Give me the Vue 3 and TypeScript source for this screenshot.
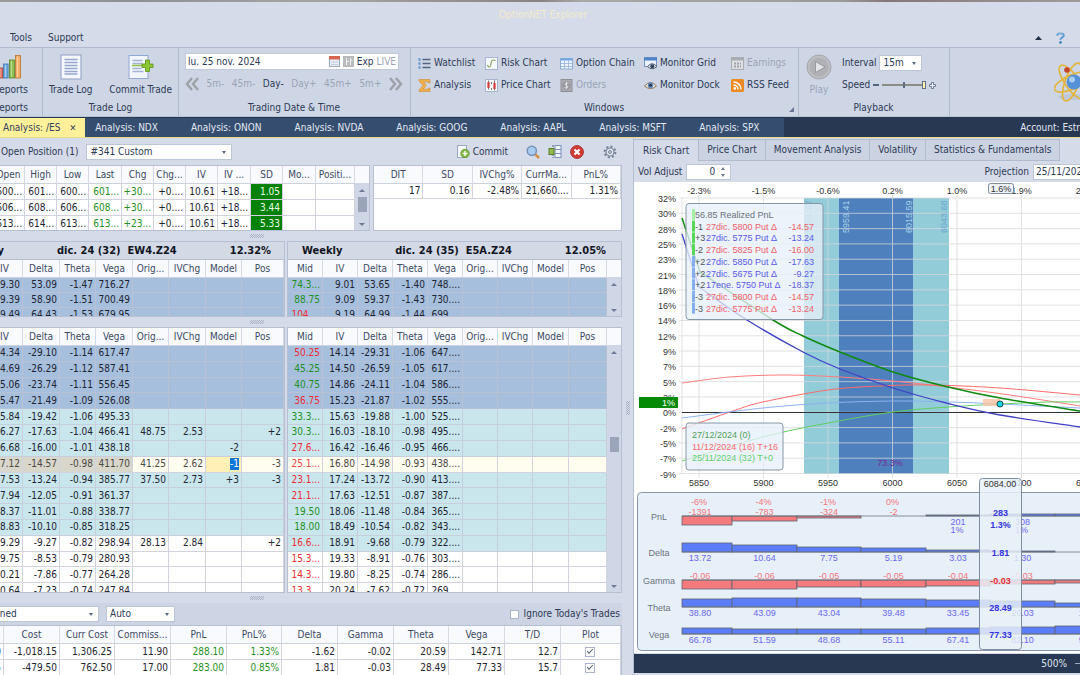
<script setup lang="ts">
type Pt = [number, number]
interface Row { cells: string[]; tone: string }

const analysisTabs = ['NDX', 'ONON', 'NVDA', 'GOOG', 'AAPL', 'MSFT', 'SPX']
const steps = [
  { label: '5m-', on: false }, { label: '45m-', on: false }, { label: 'Day-', on: true },
  { label: 'Day+', on: false }, { label: '45m+', on: false }, { label: '5m+', on: false },
]
const windowTools = [
  { id: 'watch', label: 'Watchlist' }, { id: 'risk', label: 'Risk Chart' }, { id: 'chain', label: 'Option Chain' },
  { id: 'grid', label: 'Monitor Grid' }, { id: 'earn', label: 'Earnings', off: true },
  { id: 'sigma', label: 'Analysis' }, { id: 'price', label: 'Price Chart' }, { id: 'orders', label: 'Orders', off: true },
  { id: 'eye', label: 'Monitor Dock' }, { id: 'rss', label: 'RSS Feed' },
]

const quoteHead = ['Open', 'High', 'Low', 'Last', 'Chg', 'Chg...', 'IV', 'IV ...', 'SD', 'Mo...', 'Positi...']
const quoteWidths = [32, 32, 32, 33, 32, 32, 32, 33, 32, 33, 39]
const quotes = [
  ['600...', '601...', '600...', '601...', '+30...', '+0....', '10.61', '+18...', '1.05', '', ''],
  ['606...', '608...', '606...', '608...', '+30...', '+0....', '10.61', '+18...', '3.44', '', ''],
  ['613...', '614...', '613...', '613...', '+23...', '+0....', '10.61', '+18...', '5.33', '', ''],
]
const statHead = ['DIT', 'SD', 'IVChg%', 'CurrMa...', 'PnL%']
const stats = ['17', '0.16', '-2.48%', '21,660....', '1.31%']

const leftHead = ['IV', 'Delta', 'Theta', 'Vega', 'Orig...', 'IVChg', 'Model', 'Pos']
const leftWidths = [36, 37, 36, 37, 36, 37, 36, 42]
const rightHead = ['Mid', ...leftHead]
const rightWidths = [35, 35, 35, 35, 35, 35, 35, 36, 38]

function rows(text: string): Row[] {
  return text.trim().split('\n').map((line) => {
    const [tone, ...cells] = line.trim().split(/\s+/)
    return { tone, cells: cells.map((c) => (c === '_' ? '' : c)) }
  })
}
const leftCalls = rows(`
  deep 9.30 53.09 -1.47 716.27 _ _ _ _
  deep 9.39 58.90 -1.51 700.49 _ _ _ _
  deep 9.49 64.43 -1.53 679.95 _ _ _ _`)
const rightCalls = rows(`
  deep g74.3... 9.01 53.65 -1.40 748.... _ _ _ _
  deep g88.75 9.09 59.37 -1.43 730.... _ _ _ _
  deep r104.... 9.19 64.99 -1.44 699.... _ _ _ _`)
const leftPuts = rows(`
  deep 14.34 -29.10 -1.14 617.47 _ _ _ _
  deep 14.69 -26.29 -1.12 587.41 _ _ _ _
  deep 15.06 -23.74 -1.11 556.45 _ _ _ _
  deep 15.47 -21.49 -1.09 526.08 _ _ _ _
  pale 15.84 -19.42 -1.06 495.33 _ _ _ _
  pale 16.27 -17.63 -1.04 466.41 48.75 2.53 _ +2
  pale 16.68 -16.00 -1.01 438.18 _ _ -2 _
  pick 17.12 -14.57 -0.98 411.70 41.25 2.62 -1 -3
  pale 17.53 -13.24 -0.94 385.77 37.50 2.73 +3 -3
  pale 17.94 -12.05 -0.91 361.37 _ _ _ _
  pale 18.37 -11.01 -0.88 338.77 _ _ _ _
  pale 18.83 -10.10 -0.85 318.25 _ _ _ _
  none 19.29 -9.27 -0.82 298.94 28.13 2.84 _ +2
  none 19.75 -8.53 -0.79 280.93 _ _ _ _
  none 20.21 -7.86 -0.77 264.28 _ _ _ _
  none 20.64 -7.23 -0.74 247.84 _ _ _ _`)
const rightPuts = rows(`
  deep r50.25 14.14 -29.31 -1.06 647.... _ _ _ _
  deep g45.25 14.50 -26.59 -1.05 617.... _ _ _ _
  deep g40.75 14.86 -24.11 -1.04 586.... _ _ _ _
  deep r36.75 15.23 -21.87 -1.02 555.... _ _ _ _
  pale g33.3... 15.63 -19.88 -1.00 525.... _ _ _ _
  pale g30.3... 16.03 -18.10 -0.98 495.... _ _ _ _
  pale r27.6... 16.42 -16.46 -0.95 466.... _ _ _ _
  pick r25.1... 16.80 -14.98 -0.93 438.... _ _ _ _
  pale r23.1... 17.24 -13.72 -0.90 413.... _ _ _ _
  pale r21.1... 17.63 -12.51 -0.87 387.... _ _ _ _
  pale g19.50 18.06 -11.48 -0.84 365.... _ _ _ _
  pale g18.00 18.49 -10.54 -0.82 343.... _ _ _ _
  pale r16.6... 18.91 -9.68 -0.79 322.... _ _ _ _
  none r15.3... 19.33 -8.91 -0.76 303.... _ _ _ _
  none r14.3... 19.80 -8.25 -0.74 286.... _ _ _ _
  none r13.3... 20.24 -7.62 -0.72 269.... _ _ _ _`)

const panels = [
  { side: 'left', name: 'Weekly', expiry: 'dic. 24 (32)  EW4.Z24', iv: '12.32%', head: leftHead, widths: leftWidths, calls: leftCalls, puts: leftPuts },
  { side: 'right', name: 'Weekly', expiry: 'dic. 24 (35)  E5A.Z24', iv: '12.05%', head: rightHead, widths: rightWidths, calls: rightCalls, puts: rightPuts },
]
const shown = (c: string) => c.replace(/^[gr]/, '')
const hue = (c: string) => (c[0] === 'g' ? 'up' : c[0] === 'r' ? 'down' : '')

const sumHead = ['', 'Cost', 'Curr Cost', 'Commiss...', 'PnL', 'PnL%', 'Delta', 'Gamma', 'Theta', 'Vega', 'T/D', 'Plot']
const sumWidths = [36, 56, 55, 56, 56, 55, 56, 56, 55, 56, 56, 60]
const sums = [
  ['0', '-1,018.15', '1,306.25', '11.90', '288.10', '1.33%', '-1.62', '-0.02', '20.59', '142.71', '12.7'],
  ['5', '-479.50', '762.50', '17.00', '283.00', '0.85%', '1.81', '-0.03', '28.49', '77.33', '15.7'],
]

const chartTabs = ['Risk Chart', 'Price Chart', 'Movement Analysis', 'Volatility', 'Statistics & Fundamentals']

/* Chart geometry */
const pctLabels = ['32%', '30%', '28%', '25%', '23%', '21%', '18%', '16%', '14%', '12%', '9%', '7%', '5%', '2%', '0%', '-2%', '-5%', '-7%', '-9%']
const yAt = (i: number) => 198 + (i * 275.5) / 18
const xAt = (price: number) => 699 + ((price - 5850) * 64.5) / 50
const prices = [5850, 5900, 5950, 6000, 6050, 6100, 6150]
const moves = ['-2.3%', '-1.5%', '-0.6%', '0.2%', '1.0%', '1.9%', '2.7%']

function smooth(pts: Pt[]): string {
  let d = `M${pts[0][0]} ${pts[0][1]}`
  for (let i = 0; i < pts.length - 1; i++) {
    const a = pts[Math.max(i - 1, 0)], b = pts[i], c = pts[i + 1], e = pts[Math.min(i + 2, pts.length - 1)]
    d += `C${b[0] + (c[0] - a[0]) / 6} ${b[1] + (c[1] - a[1]) / 6} ${c[0] - (e[0] - b[0]) / 6} ${c[1] - (e[1] - b[1]) / 6} ${c[0]} ${c[1]}`
  }
  return d
}
const curves = [
  { color: '#ff7d7d', w: 1, d: smooth([[682, 383], [730, 377], [785, 375], [840, 377], [893, 381], [948, 387], [1010, 395], [1080, 406]]) },
  { color: '#ff6a6a', w: 1, d: smooth([[682, 429], [733, 411], [763, 402], [828, 390], [880, 386], [930, 385], [1000, 388], [1080, 395]]) },
  { color: '#8db2f0', w: 1, d: smooth([[682, 418], [763, 408], [828, 403], [893, 401], [950, 402], [1000, 404], [1080, 408]]) },
  { color: '#62cf62', w: 1, d: smooth([[682, 461], [763, 437], [828, 423], [893, 412], [948, 407], [1000, 404], [1050, 402], [1080, 402]]) },
  { color: '#4040c8', w: 1.3, d: 'M682 234L699 287' + smooth([[699, 287], [747, 320], [803, 352], [840, 369], [893, 388], [950, 404], [1000, 415], [1080, 427]]).replace('M', 'L') },
  { color: '#108a10', w: 1.5, d: 'M682 218L700 272' + smooth([[700, 272], [773, 320], [803, 336], [840, 352], [893, 372], [948, 387], [1000, 398], [1080, 411]]).replace('M', 'L') },
]
const zones = [
  { label: '5931.32', x: 811, color: '#6aa9cc' }, { label: '5959.41', x: 849, color: '#a9d3ea' },
  { label: '6015.59', x: 912, color: '#a9d3ea' }, { label: '6043.68', x: 947, color: '#6aa9cc' },
]
const legs = [
  { qty: '', text: '56.85 Realized PnL', delta: '', tone: '#6b747c', bar: '#a4f0a4' },
  { qty: '-1', text: '27dic. 5800 Put Δ', delta: '-14.57', tone: '#ee6068', bar: '#58d858' },
  { qty: '+3', text: '27dic. 5775 Put Δ', delta: '-13.24', tone: '#5a5ae8', bar: '#58d858' },
  { qty: '-2', text: '27dic. 5825 Put Δ', delta: '-16.00', tone: '#ee6068', bar: '#58d858' },
  { qty: '+2', text: '27dic. 5850 Put Δ', delta: '-17.63', tone: '#5a5ae8', bar: '#84aeec' },
  { qty: '+2', text: '27dic. 5675 Put Δ', delta: '-9.27', tone: '#5a5ae8', bar: '#84aeec' },
  { qty: '+2', text: '17ene. 5750 Put Δ', delta: '-18.37', tone: '#5a5ae8', bar: '#84aeec' },
  { qty: '-3', text: '27dic. 5800 Put Δ', delta: '-14.57', tone: '#ee6068', bar: '#84aeec' },
  { qty: '-3', text: '27dic. 5775 Put Δ', delta: '-13.24', tone: '#ee6068', bar: '#84aeec' },
]
const edges = [682, 732, 797, 861, 926, 990, 1055, 1120]
const greeks = [
  { name: 'PnL', base: 516, size: [-9, -5, -2, 0, 1, 2, 2], vals: ['-1391', '-783', '-324', '-2', '201', '308', '380'], now: '283', neg: false },
  { name: 'Delta', base: 552, size: [9, 7, 5, 4, 2, 1, 0], vals: ['13.72', '10.64', '7.75', '5.19', '3.03', '1.30', '0.02'], now: '1.81', neg: false },
  { name: 'Gamma', base: 580, size: [-9, -9, -7, -7, -6, -4, -3], vals: ['-0.06', '-0.06', '-0.05', '-0.05', '-0.04', '-0.03', '-0.02'], now: '-0.03', neg: true },
  { name: 'Theta', base: 607, size: [8, 9, 9, 8, 7, 6, 4], vals: ['38.80', '43.09', '43.04', '39.48', '33.45', '26.03', '18.88'], now: '28.49', neg: false },
  { name: 'Vega', base: 634, size: [6, 5, 5, 5, 6, 7, 8], vals: ['66.78', '51.59', '48.68', '55.11', '67.41', '82.10', '95.10'], now: '77.33', neg: false },
]
const pnlPct = ['-6%', '-4%', '-1%', '0%', '1%', '1%', '2%']
const isNeg = (v: string) => v.startsWith('-')
const valueY = (g: { base: number }, v: string) => (isNeg(v) ? g.base - 1 : g.base + 9)
</script>

<template>
  <div class="app">
    <div class="backdrop"></div>
    <header class="title">
      <h1>OptionNET Explorer</h1>
      <nav class="menu">
        <a href="#">Tools</a><a href="#">Support</a>
        <span class="grow"></span>
        <svg width="7" height="4" viewBox="0 0 7 4"><path d="M0 4L3.5 0L7 4Z" fill="#26324a" /></svg>
        <svg class="help" width="9" height="12" viewBox="0 0 10 13"><path d="M1.5 4C1.5 0.8 8.5 0.8 8.5 4C8.5 6 5 5.6 5 8.4" fill="none" stroke="#5f9fd0" stroke-width="2.4" /><path d="M2.2 3.4C3 1.6 6 1.500 7.400 2.800" fill="none" stroke="#b6d9f2" /><circle cx="5" cy="11.4" r="1.5" fill="#3e85bd" /></svg>
      </nav>
    </header>

    <section class="ribbon">
      <div class="group g-reports">
        <button class="big">
          <svg width="28" height="26" viewBox="0 0 28 26"><g stroke-width=".8"><rect x="1" y="14" width="4.6" height="10" fill="#e37a68" stroke="#b04838" /><rect x="6.5" y="10" width="4.6" height="14" fill="#73abdf" stroke="#3b74ac" /><rect x="12.5" y="6" width="5" height="18" fill="#8ec054" stroke="#57852a" /><rect x="18.5" y="1.500" width="5" height="22.500" fill="#f3b06a" stroke="#b87430" /><path d="M3 15v8M8.500 11v12M14.500 7v16M20.500 3v20" stroke="#fff" opacity=".5" /></g></svg>
          <span>Reports</span>
        </button>
        <p>Reports</p>
      </div>
      <div class="group g-log">
        <div class="bigs">
          <button class="big">
            <svg width="22" height="26" viewBox="0 0 22 26"><rect x="1" y="1" width="20" height="24" fill="#f4f7fc" stroke="#8c9fc4" /><path d="M4.500 5.500h13M4.500 8.500h13M4.500 11.500h13M4.500 14.500h13M4.500 17.500h13M4.500 20h13" stroke="#97a7cd" stroke-width="1.600" /></svg>
            <span>Trade Log</span>
          </button>
          <button class="big">
            <svg width="26" height="26" viewBox="0 0 26 26"><rect x="1" y="1.500" width="19" height="23" fill="#f1f5fc" stroke="#8fa8d4" /><path d="M4.500 6.500h10M4.500 9.500h10M4.500 14.500h9M4.500 17.500h11" stroke="#a5b2d2" stroke-width="1.600" /><path d="M4 11.500h13" stroke="#8fc043" stroke-width="1.500" /><path d="M17.500 6h4v4h3.500v3.500h-3.500v4h-4v-4H14v-3.500h3.500Z" fill="#8cc834" stroke="#5c9018" stroke-width=".8" /></svg>
            <span>Commit Trade</span>
          </button>
        </div>
        <p>Trade Log</p>
      </div>
      <div class="group g-date">
        <div>
          <div class="datebox">
            <input type="text" value="lu. 25 nov. 2024" aria-label="Trading date">
            <svg width="11" height="11" viewBox="0 0 11 11"><rect x=".5" y=".5" width="10" height="10" fill="#e9edf6" stroke="#9aa5be" /><path d="M0 0h11v3.500H0Z" fill="#d6664f" /><path d="M2 6h7M2 8.500h7" stroke="#c4cbdc" /></svg>
            <svg width="11" height="11" viewBox="0 0 11 11"><rect width="11" height="11" fill="#b9babd" /><path d="M3.500 2v7M7.500 2v7M4 5.500h2M8 4h1.500" stroke="#f2f2f2" /></svg>
            <span>Exp</span><span class="dim">LIVE</span>
          </div>
          <div class="steps">
            <button aria-label="Back"><svg width="14" height="14" viewBox="0 0 14 14"><path d="M7 1L2 7L7 13M13 1L8 7L13 13" fill="none" stroke="#9da1a8" stroke-width="2.400" /></svg></button>
            <button v-for="s in steps" :key="s.label" :class="{ dim: !s.on }">{{ s.label }}</button>
            <button aria-label="Forward"><svg width="14" height="14" viewBox="0 0 14 14"><path d="M1 1L6 7L1 13M7 1L12 7L7 13" fill="none" stroke="#9da1a8" stroke-width="2.400" /></svg></button>
          </div>
        </div>
        <p>Trading Date &amp; Time</p>
      </div>
      <div class="group g-win">
        <div class="tools">
          <button v-for="t in windowTools" :key="t.id" :class="{ dim: t.off }">
            <svg width="13" height="13" viewBox="0 0 13 13">
              <template v-if="t.id === 'watch'"><path d="M4.500 2.500H12.500M4.500 6.500H12.500M4.500 10.500H12.500" stroke="#52647f" stroke-width="1.300" /><path d="M.5 2.500h2M.5 6.500h2M.5 10.500h2" stroke="#5f93cc" stroke-width="2.400" /></template>
              <template v-else-if="t.id === 'risk'"><rect x=".5" y=".5" width="12" height="12" fill="#f6f9fb" stroke="#a7b5d0" /><path d="M2.500 8C3.500 11.500 6 10 6 6.500S8.500 2.500 10.500 3.500" fill="none" stroke="#8aa05a" stroke-width="1.100" /></template>
              <template v-else-if="t.id === 'chain'"><rect x=".5" y="1.500" width="12" height="10.500" fill="#eef4fc" stroke="#8cacd6" /><path d="M1 2.500H12" stroke="#6fa5e0" stroke-width="2" /><path d="M1 6.500h11M1 9.500h11M4.500 4v8M8.500 4v8" stroke="#a5bde0" /></template>
              <template v-else-if="t.id === 'grid'"><rect x=".5" y=".5" width="12" height="9" fill="#eaf1fa" stroke="#7293c2" /><path d="M0 2H13" stroke="#4d84c8" stroke-width="3" /><path d="M3.500 9.500Q8 4 13 9.500Q8 14 3.500 9.500" fill="#dbe2ea" stroke="#4d5c70" /><circle cx="8.300" cy="9.200" r="2" fill="#34465f" /></template>
              <template v-else-if="t.id === 'earn'"><rect x=".5" y=".5" width="12" height="12" fill="#dfe0e4" stroke="#a9acb2" /><path d="M0 2H13" stroke="#a9acb2" stroke-width="3" /><path d="M3 6.500h7M3 9.500h7" stroke="#9ea1a8" stroke-width="2" stroke-dasharray="2 1" /></template>
              <template v-else-if="t.id === 'sigma'"><path d="M1 .5H12V4H10.500L10 2.800H5.500L8.500 6.500L5 10.200H10L10.700 9H12V12.500H1V11L5 6.500L1 2Z" fill="#f0b04c" stroke="#cf8c30" stroke-width=".6" /></template>
              <template v-else-if="t.id === 'price'"><rect x=".5" y=".5" width="12" height="12" fill="#f8f8fb" stroke="#a7b5d0" /><path d="M3.500 1.500v9M6.500 3v8M9.500 1.500v10" stroke="#555" stroke-width=".8" /><path d="M3.500 3v6M9.500 4v6" stroke="#d73a3a" stroke-width="2.200" /><path d="M6.500 5v4" stroke="#fff" stroke-width="1.800" /></template>
              <template v-else-if="t.id === 'orders'"><rect x="1" y=".5" width="11" height="12" fill="#a9abb0" stroke="#8e9096" /><circle cx="6.500" cy="6.500" r="4.200" fill="#96989c" /><path d="M8.500 4.500C5 3 4 6 6.500 6.500S8 10 4.500 8.500M6.500 3v7" fill="none" stroke="#e1e2e5" /></template>
              <template v-else-if="t.id === 'eye'"><path d="M.5 7Q6.500 0 12.500 7Q6.500 12 .5 7" fill="#f2eee6" stroke="#8c7050" /><circle cx="6.500" cy="6.300" r="2.800" fill="#5f86b8" /><circle cx="6.500" cy="6.300" r="1.300" fill="#1e2c40" /></template>
              <template v-else><rect width="13" height="13" rx="1.500" fill="#ee8a22" /><circle cx="3.800" cy="9.400" r="1.300" fill="#fff" /><path d="M2.500 6a4.500 4.500 0 0 1 4.600 4.600M2.500 3a7.500 7.500 0 0 1 7.600 7.600" fill="none" stroke="#fff" stroke-width="1.400" /></template>
            </svg>
            {{ t.label }}
          </button>
        </div>
        <p>Windows</p>
        <svg class="launcher" width="5" height="5" viewBox="0 0 5 5"><path d="M5 0V5H0Z" fill="#66758f" /></svg>
      </div>
      <div class="group g-play">
        <div class="playrow">
          <button class="big dim">
            <svg width="26" height="26" viewBox="0 0 26 26"><circle cx="13" cy="13" r="12" fill="#bdbec2" stroke="#a5a7ac" /><circle cx="13" cy="13" r="9.500" fill="#b0b1b6" /><path d="M9.500 7.500L19 13L9.500 18.500Z" fill="#e2e3e6" stroke="#8c8e93" stroke-width=".8" /></svg>
            <span>Play</span>
          </button>
          <div class="settings">
            <div class="line"><label for="interval">Interval</label><span class="combo c-int"><select id="interval"><option>15m</option></select></span></div>
            <div class="line"><label for="speed">Speed</label><svg width="6" height="2" viewBox="0 0 6 2"><path d="M0 1H6" stroke="#56657f" stroke-width="2" /></svg><input id="speed" type="range" min="0" max="2" value="2"><svg width="7" height="7" viewBox="0 0 7 7"><path d="M2.500 .5h2v2h2v2h-2v2h-2v-2h-2v-2h2Z" fill="#e8edf6" stroke="#56657f" stroke-width=".8" /></svg></div>
          </div>
        </div>
        <p>Playback</p>
      </div>
      <div class="atom">
        <svg width="26" height="42" viewBox="0 0 26 42"><ellipse cx="18" cy="36" rx="14" ry="3" fill="#b4bccb" opacity=".6" /><g fill="none" stroke="#e2b53e" stroke-width="1.700"><ellipse cx="18" cy="21" rx="7" ry="20" transform="rotate(-35 18 21)" /><ellipse cx="18" cy="21" rx="7" ry="20" transform="rotate(20 18 21)" /><ellipse cx="18" cy="21" rx="7" ry="19" transform="rotate(66 18 21)" /></g><circle cx="20" cy="21" r="7.500" fill="#5591d6" /><circle cx="18" cy="18.500" r="3" fill="#a8ccf2" /><circle cx="13" cy="9" r="2.800" fill="#c8432c" /></svg>
      </div>
    </section>

    <nav class="doctabs">
      <button class="on">Analysis: /ES <span>✕</span></button>
      <button v-for="t in analysisTabs" :key="t">Analysis: {{ t }}</button>
      <span class="account">Account: Estr</span>
    </nav>

    <main class="work">
      <section class="book">
        <div class="bar">
          <label for="pos">Open Position (1)</label>
          <span class="combo c-pos"><select id="pos"><option>#341 Custom</option></select></span>
          <span class="grow"></span>
          <button class="commit">
            <svg width="13" height="13" viewBox="0 0 13 13"><rect x=".5" y=".5" width="9" height="12" fill="#f5f8fc" stroke="#98a9ca" /><circle cx="8" cy="8.500" r="4.300" fill="#7fb83c" stroke="#557f2a" stroke-width=".6" /><path d="M8 6v5M5.500 8.500h5" stroke="#fff" stroke-width="1.400" /></svg>
            Commit
          </button>
          <button aria-label="Find"><svg width="14" height="14" viewBox="0 0 14 14"><path d="M9 9L13 13" stroke="#d5914a" stroke-width="2.600" /><circle cx="5.800" cy="5.800" r="4.600" fill="#a9cdf0" stroke="#7891b8" stroke-width="1.500" /></svg></button>
          <button aria-label="Columns"><svg width="14" height="13" viewBox="0 0 14 13"><rect x="7" y=".5" width="6" height="12" fill="#f1f5fb" stroke="#7c90b8" /><path d="M7 4.500h6M7 8.500h6" stroke="#7c90b8" /><path d="M5 0v13" stroke="#55657f" stroke-dasharray="2 1" /><rect x="1" y="3.500" width="5" height="6" fill="#94b84a" stroke="#5e7d2b" /></svg></button>
          <button aria-label="Close"><svg width="14" height="14" viewBox="0 0 14 14"><circle cx="7" cy="7" r="6.400" fill="#d23a34" stroke="#a83832" /><path d="M4.500 4.500L9.500 9.500M9.500 4.500L4.500 9.500" stroke="#fff" stroke-width="2.200" /></svg></button>
          <button aria-label="Settings" class="gear"><svg width="14" height="14" viewBox="0 0 14 14"><circle cx="7" cy="7" r="5.400" fill="none" stroke="#77839a" stroke-width="2" stroke-dasharray="2.100 2.100" /><circle cx="7" cy="7" r="4" fill="#e3e7ee" stroke="#77839a" stroke-width="1.200" /><circle cx="7" cy="7" r="1.500" fill="#cdd4e2" stroke="#77839a" /></svg></button>
        </div>

        <div class="tops">
          <div class="frame quotes">
            <table>
              <colgroup><col v-for="(w, i) in quoteWidths" :key="i" :style="{ width: w + 'px' }"></colgroup>
              <thead><tr><th v-for="h in quoteHead" :key="h">{{ h }}</th></tr></thead>
              <tbody><tr v-for="(r, i) in quotes" :key="i"><td v-for="(c, j) in r" :key="j" :class="{ up: j === 3 || j === 4, sd: j === 8 }">{{ c }}</td></tr></tbody>
            </table>
            <div class="scroll"><i class="cap"></i><i class="arrow upward"></i><i class="thumb"></i><span class="grow"></span><i class="arrow"></i></div>
          </div>
          <div class="frame stats">
            <table>
              <thead><tr><th v-for="h in statHead" :key="h">{{ h }}</th></tr></thead>
              <tbody><tr><td v-for="c in stats" :key="c">{{ c }}</td></tr></tbody>
            </table>
          </div>
        </div>
        <div class="grip"><i></i></div>

        <div class="chains calls">
          <div v-for="p in panels" :key="p.side" class="frame chain" :class="p.side">
            <div class="caption"><span class="name">{{ p.name }}</span><span>{{ p.expiry }}</span><span>{{ p.iv }}</span></div>
            <div class="pane">
              <table>
                <colgroup><col v-for="(w, i) in p.widths" :key="i" :style="{ width: w + 'px' }"></colgroup>
                <thead><tr><th v-for="h in p.head" :key="h">{{ h }}</th></tr></thead>
                <tbody><tr v-for="(r, i) in p.calls" :key="i" :class="r.tone"><td v-for="(c, j) in r.cells" :key="j" :class="hue(c)">{{ shown(c) }}</td></tr></tbody>
              </table>
              <div v-if="p.side === 'right'" class="scroll"><i class="cap"></i><i class="arrow upward"></i><span class="grow"></span><i class="arrow"></i></div>
            </div>
          </div>
        </div>
        <div class="grip"><i></i></div>

        <div class="chains puts">
          <div v-for="p in panels" :key="p.side" class="frame chain" :class="p.side">
            <div class="pane">
              <table>
                <colgroup><col v-for="(w, i) in p.widths" :key="i" :style="{ width: w + 'px' }"></colgroup>
                <thead><tr><th v-for="h in p.head" :key="h">{{ h }}</th></tr></thead>
                <tbody>
                  <tr v-for="(r, i) in p.puts" :key="i" :class="r.tone">
                    <td v-for="(c, j) in r.cells" :key="j" :class="[hue(c), { edit: p.side === 'left' && r.tone === 'pick' && j === 6 }]">
                      <input v-if="p.side === 'left' && r.tone === 'pick' && j === 6" type="text" :value="c" aria-label="Model quantity">
                      <template v-else>{{ shown(c) }}</template>
                    </td>
                  </tr>
                </tbody>
              </table>
              <div v-if="p.side === 'right'" class="scroll tall"><i class="cap"></i><i class="arrow upward"></i><i class="thumb"></i><span class="grow"></span><i class="arrow"></i></div>
            </div>
          </div>
        </div>
        <div class="grip"><i></i></div>

        <div class="bar options">
          <span class="combo c-mode"><select aria-label="Grouping"><option>Combined</option></select></span>
          <span class="combo c-auto"><select aria-label="Mode"><option>Auto</option></select></span>
          <span class="grow"></span>
          <label class="check"><input type="checkbox"> Ignore Today's Trades</label>
        </div>
        <div class="frame sums">
          <table>
            <colgroup><col v-for="(w, i) in sumWidths" :key="i" :style="{ width: w + 'px' }"></colgroup>
            <thead><tr><th v-for="h in sumHead" :key="h">{{ h }}</th></tr></thead>
            <tbody>
              <tr v-for="(r, i) in sums" :key="i">
                <td v-for="(c, j) in r" :key="j" :class="{ up: j === 4 || j === 5 }">{{ c }}</td>
                <td class="plot"><input type="checkbox" checked aria-label="Plot"></td>
              </tr>
            </tbody>
          </table>
        </div>
      </section>

      <div class="vgrip"><i></i></div>

      <section class="charts">
        <nav class="charttabs"><button v-for="(t, i) in chartTabs" :key="t" :class="{ on: i === 0 }">{{ t }}</button></nav>
        <div class="bar adjust">
          <label for="vol">Vol Adjust</label>
          <span class="spin"><input id="vol" type="text" value="0"><span><i class="arrow upward"></i><i class="arrow"></i></span></span>
          <span class="grow"></span>
          <label for="proj">Projection</label>
          <input id="proj" class="proj" type="text" value="25/11/2024">
        </div>
        <svg class="plotarea" viewBox="634 182 446 471" preserveAspectRatio="xMinYMin slice">
          <rect x="804" y="198" width="145" height="276" fill="#92ccd9" />
          <rect x="839" y="198" width="74" height="276" fill="#4d80bc" />
          <g stroke="#d8d8dc" stroke-width="1" opacity=".75">
            <path v-for="(l, i) in pctLabels" :key="l" :d="`M679 ${yAt(i)}H1080`" />
            <path v-for="p in prices" :key="p" :d="`M${xAt(p)} 195V478`" />
            <path d="M682 198V474" />
          </g>
          <g fill="#333">
            <text v-for="(l, i) in pctLabels" :key="l" x="676" :y="yAt(i) + 4" text-anchor="end">{{ l }}</text>
            <text v-for="(p, i) in prices" :key="p" :x="xAt(p)" y="486" text-anchor="middle">{{ p }}</text>
            <text v-for="(m, i) in moves" :key="m" :x="xAt(prices[i])" y="194" text-anchor="middle">{{ m }}</text>
          </g>
          <rect x="988.500" y="183.500" width="25" height="10" rx="2" fill="#eef2f8" stroke="#7f8c9c" />
          <text x="1001" y="192" text-anchor="middle" fill="#333">1.6%</text>
          <text v-for="z in zones" :key="z.label" :transform="`translate(${z.x} 233) rotate(-90)`" :fill="z.color">{{ z.label }}</text>
          <path d="M682 412.500H1080" stroke="#333" />
          <path v-for="c in curves" :key="c.color" :d="c.d" fill="none" :stroke="c.color" :stroke-width="c.w" />
          <rect x="983" y="399" width="17" height="7" fill="#f9c4a8" opacity=".85" />
          <circle cx="1000" cy="404" r="3" fill="#18d8ea" stroke="#184848" />
          <text x="890" y="466" text-anchor="middle" fill="#7a2a96">73.3%</text>
          <rect x="639" y="397" width="39" height="11" fill="#058a05" />
          <text x="675" y="406" text-anchor="end" fill="#fff">1%</text>

          <rect x="686" y="203.500" width="137" height="116" rx="3" fill="#e8f0f9" fill-opacity=".78" stroke="#8796a6" />
          <g v-for="(l, i) in legs" :key="i">
            <rect x="692" :y="209 + i * 11.700" width="3" height="11" :fill="l.bar" />
            <text x="695" :y="218 + i * 11.700" fill="#4c545c">{{ l.qty }}</text>
            <text :x="l.qty ? 706 : 695" :y="218 + i * 11.700" :fill="l.tone">{{ l.text }}</text>
            <text x="814" :y="218 + i * 11.700" text-anchor="end" :fill="l.tone">{{ l.delta }}</text>
          </g>
          <rect x="686" y="423" width="97" height="47" rx="3" fill="#e8f0f9" fill-opacity=".78" stroke="#8796a6" />
          <text x="692" y="438" fill="#4f9e5a">27/12/2024 (0)</text>
          <text x="692" y="450" fill="#f56a70">11/12/2024 (16) T+16</text>
          <text x="692" y="461" fill="#62cf70">25/11/2024 (32) T+0</text>

          <rect x="637.500" y="492.500" width="500" height="158" rx="4" fill="#e7eff8" stroke="#8796a6" />
          <g v-for="g in greeks" :key="g.name">
            <text x="659" :y="g.base + 4" text-anchor="middle" fill="#6a7480">{{ g.name }}</text>
            <rect v-for="(s, i) in g.size" :key="i" :x="edges[i]" :y="s < 0 ? g.base : g.base - s" :width="edges[i + 1] - edges[i]" :height="Math.abs(s)" :fill="s < 0 ? '#f57a7d' : '#5b7dfa'" stroke="#5d6470" stroke-width=".8" />
            <path :d="`M682 ${g.base}H1080`" stroke="#6d747e" stroke-width=".8" />
            <text v-for="(v, i) in g.vals" :key="v + i" :x="xAt(prices[i]) + (i > 5 ? 4 : 1)" :y="valueY(g, v)" text-anchor="middle" :fill="isNeg(v) ? '#f2767c' : '#6a6af2'">{{ v }}</text>
          </g>
          <text v-for="(v, i) in pnlPct" :key="i" :x="xAt(prices[i])" :y="i < 4 ? 505 : 533" text-anchor="middle" :fill="i < 4 ? '#f2767c' : '#6a6af2'">{{ v }}</text>

          <rect x="979.500" y="478.500" width="42" height="171" rx="3" fill="#e8eff8" fill-opacity=".84" stroke="#7f8da0" />
          <text x="1000" y="487" text-anchor="middle" fill="#333">6084.00</text>
          <g class="now">
            <text v-for="g in greeks" :key="g.name" x="1000.500" :y="g.base + (g.name === 'PnL' ? 0 : 4)" text-anchor="middle" :fill="g.neg ? '#e8303a' : '#3434e0'">{{ g.now }}</text>
            <text x="1000.500" y="528" text-anchor="middle" fill="#3434e0">1.3%</text>
          </g>
        </svg>
        <footer class="status"><span>500%</span><i></i></footer>
      </section>
    </main>
  </div>
</template>

<style>
html, body { margin: 0; height: 100%; overflow: hidden; background: #d5dbe9; }
</style>

<style scoped>
.app { font: 10px/14px "DejaVu Sans Condensed", "Noto Sans", sans-serif; color: #2d3a54; background: #d5dbe9; }
.app * { box-sizing: border-box; }
button, input, select { font: inherit; color: inherit; background: none; border: 0; padding: 0; margin: 0; }
button { display: flex; align-items: center; white-space: nowrap; }
svg { display: block; flex: none; }
.grow { flex: 1; }
.dim { color: #9ba3b5; }
.backdrop { height: 2px; background: linear-gradient(90deg, #9c9d9b, #8e8f90 12%, #a5a6a3 30%, #8a8282 50%, #a9aaa6 54%, #9a9b98 78%, #86767a 82%, #a09c98); }
.title h1 { margin: 0; padding-top: 6px; font-size: 10px; line-height: 14px; font-weight: 400; text-align: center; text-indent: 6px; color: #f3ebcb; }
.menu { display: flex; align-items: center; height: 25px; padding: 7px 15px 0 10px; }
.menu a { color: inherit; text-decoration: none; margin-right: 16px; }
.help { margin-left: 14px; }

.ribbon { display: flex; height: 70px; background: #ced6e6; border-top: 1px solid #b0bbcf; border-bottom: 1px solid #b7c4d6; overflow: hidden; }
.group { display: flex; flex-direction: column; justify-content: space-between; flex: none; border-right: 1px solid #aebace; padding: 6px 8px 0; position: relative; }
.group p { margin: 0; text-align: center; line-height: 16px; }
.g-reports { width: 43px; align-items: flex-end; padding-right: 14px; }
.g-log { width: 136px; padding: 6px 6px 0; }
.g-date { width: 232px; padding: 5px 7px 0 6px; }
.g-win { width: 388px; padding-left: 7px; }
.g-play { width: 151px; padding-left: 7px; }
.bigs, .playrow { display: flex; justify-content: space-between; }
.big { flex-direction: column; line-height: 16px; gap: 2px; }
.datebox { display: flex; align-items: center; gap: 3px; height: 17px; margin-right: 4px; padding: 0 2px; background: #fff; border: 1px solid #c1cada; }
.datebox input { flex: 1; min-width: 0; }
.steps { display: flex; justify-content: space-between; height: 27px; align-items: center; }
.tools { display: grid; grid-template-columns: 67px 75px 84px 87px auto; row-gap: 8px; padding-top: 2px; }
.tools button { gap: 3px; }
.launcher { position: absolute; right: 4px; bottom: 4px; }
.settings { width: 99px; }
.line { display: flex; align-items: center; height: 22px; gap: 3px; margin-top: -2px; }
.line + .line { margin-top: 0; }
#speed { appearance: none; width: 44px; height: 10px; background: linear-gradient(#5f6c82, #5f6c82) center / 2px 6px no-repeat, linear-gradient(#8b8d80, #8b8d80) center / 100% 2px no-repeat; }
#speed::-webkit-slider-thumb { appearance: none; width: 4px; height: 8px; background: #fff3b0; border: 1px solid #64708a; }
.combo { position: relative; display: inline-flex; height: 16px; background: #fff; border: 1px solid #bcc6d8; }
.combo::after { content: ""; position: absolute; right: 5px; top: 6px; border: 2px solid transparent; border-top: 3px solid #596882; border-bottom: 0; pointer-events: none; }
.combo select { appearance: none; width: 100%; padding: 0 3px; }
.c-int { width: 43px; }
.c-pos { width: 146px; margin-left: 8px; }
.c-auto { width: 69px; }
.c-mode { width: 112px; margin-left: -14px; }
.c-mode select { padding-left: 0; text-indent: -17px; }
.atom { flex: 1; display: flex; justify-content: flex-end; align-items: center; }

.doctabs { display: flex; height: 21px; background: #283752; border-bottom: 1px solid #e9d98b; color: #e3e8f2; padding-top: 1px; }
.doctabs button { background: #354e70; padding: 0 24px 0 9px; }
.doctabs .on { background: #fff09a; color: #35435c; padding: 0 9px 0 3px; gap: 9px; }
.doctabs .on + button { padding-left: 10px; }
.doctabs .on span { font-size: 9px; }
.account { margin-left: auto; line-height: 20px; }

.work { display: grid; grid-template-columns: minmax(0, 622fr) 12px minmax(0, 446fr); }
.book { min-width: 0; }
.bar { display: flex; align-items: center; height: 27px; padding-left: 1px; white-space: nowrap; }
.bar button { margin-right: 8px; }
.bar .commit { gap: 3px; margin-right: 18px; }
.bar .gear { margin: 0 5px 0 11px; }
.tops { display: grid; grid-template-columns: minmax(0, 370fr) 3px minmax(0, 249fr); height: 66px; }
.stats { grid-column: 3; }
.frame { background: #fff; border: 1px solid #b6c0d2; border-left-width: 0; overflow: hidden; }
.stats, .right { border-left-width: 1px; }
.quotes, .pane { display: flex; justify-content: flex-end; }
table { border-collapse: separate; border-spacing: 0; table-layout: fixed; flex: none; color: #1d2430; }
.quotes table { width: 362px; }
.stats table { width: 100%; }
th { height: 18px; padding: 0; font-weight: 400; color: #3c4963; background: #f8fafd; border-right: 1px solid #d5dae5; border-bottom: 1px solid #ccd3df; white-space: nowrap; overflow: hidden; }
td { height: 15px; padding: 0 2px 0 0; line-height: 14px; text-align: right; white-space: nowrap; overflow: hidden; border-right: 1px solid #d2d3de; border-bottom: 1px solid #d2d3de; }
.quotes td { height: 16px; }
.up { color: #1f8f24; }
.down { color: #ef2b33; }
.sd { background: #058205; color: #e8ffe8; }
.scroll { display: flex; flex-direction: column; align-items: center; width: 14px; flex: none; background: #cfd6e6; padding-bottom: 4px; }
.cap { width: 100%; height: 17px; background: #f8fafd; }
.arrow { border: 3px solid transparent; border-top: 3px solid #6c7a93; border-bottom: 0; }
.upward { border-top: 0; border-bottom: 3px solid #6c7a93; }
.scroll .upward { margin-top: 6px; }
.thumb { width: 9px; height: 15px; margin-top: 5px; background: #9aa6b8; }
.tall .thumb { margin-top: 83px; }
.grip { height: 10px; padding: 3px 0 0 250px; }
.grip i, .vgrip i { display: block; width: 14px; height: 4px; background: repeating-conic-gradient(#a9b3c5 0 25%, transparent 0 50%) 0 0 / 2px 2px; }
.chains { display: grid; grid-template-columns: minmax(0, 285fr) 2px minmax(0, 335fr); }
.chain.right { grid-column: 3; }
.calls .chain { height: 76px; }
.puts .chain { height: 266px; }
.left table { width: 297px; }
.right table { width: 319px; }
.puts table { height: 271px; }
.puts .pane, .puts .scroll { height: 264px; }
.calls .scroll { height: 56px; }
.caption { display: flex; justify-content: space-between; height: 18px; padding: 0 15px 0 14px; font-size: 11px; font-weight: 700; line-height: 18px; color: #10151f; background: #d3d9e5; border-bottom: 1px solid #b6c0d2; white-space: pre; }
.left .caption { padding: 0 13px 0 0; }
.left .name { width: 4px; direction: rtl; overflow: hidden; }
.deep td { background: #a6bfdd; border-color: #b9c1d6; }
.pale td { background: #c8e6ec; border-color: #c6cfdb; }
.pick td { background: #fffcf0; color: #494942; }
.pick td.down { color: #f24a4a; }
.left .pick td:nth-child(-n+4) { background: #d9d6cc; }
.left .pick .edit { background: #fff0b5; }
.edit input { width: 9px; height: 12px; padding: 0; display: block; margin-left: auto; background: #0f75d6; color: #fff; text-align: right; }
.options { height: 22px; background: #cdd5e5; padding-right: 2px; gap: 7px; }
.check { display: flex; align-items: center; gap: 5px; }
input[type=checkbox] { appearance: none; width: 9px; height: 9px; background: #fff; border: 1px solid #a9b4c8; }
.plot input { display: block; margin: 0 auto; width: 10px; height: 10px; }
.plot input:checked::after { content: ""; display: block; width: 5px; height: 2px; margin: 1px; border: solid #55647d; border-width: 0 0 1px 1px; transform: rotate(-45deg); }
.sums { border-right-width: 1px; display: flex; justify-content: flex-end; }
.sums table { width: 653px; }
.sums td { height: 16px; }
.vgrip { display: flex; align-items: center; justify-content: center; border-right: 1px solid #b3bdd0; }
.vgrip i { width: 4px; height: 14px; }

.charts { min-width: 0; overflow: hidden; display: flex; flex-direction: column; }
.charttabs { display: flex; height: 23px; padding-top: 1px; }
.charttabs button { flex: none; padding: 0 8px; background: #cbd3e3; border: 1px solid #b0bbce; border-left-width: 0; }
.charttabs .on { background: #d5dbe9; border-bottom: 0; padding: 0 9px; }
.adjust { height: 21px; padding-left: 4px; overflow: hidden; }
.spin { display: flex; align-items: center; width: 45px; height: 16px; margin-left: 4px; background: #fff; border: 1px solid #bcc6d8; }
.spin input { width: 28px; text-align: right; }
.spin > span { display: flex; flex-direction: column; gap: 4px; margin-left: 6px; }
.spin .arrow { border-left-width: 2px; border-right-width: 2px; }
.proj { width: 47px; height: 16px; margin-left: 4px; padding-left: 2px; background: #fff; border: 1px solid #bcc6d8; border-right: 0; }
.plotarea { width: 100%; height: 471px; background: #fff; font: 9px "Liberation Sans", Arial, sans-serif; }
.now { font-weight: 700; }
.status { display: flex; justify-content: flex-end; align-items: center; gap: 8px; height: 19px; margin-top: 1px; background: #283752; color: #dfe5ef; }
.status i { width: 5px; height: 1px; background: #9aa6ba; }
</style>
